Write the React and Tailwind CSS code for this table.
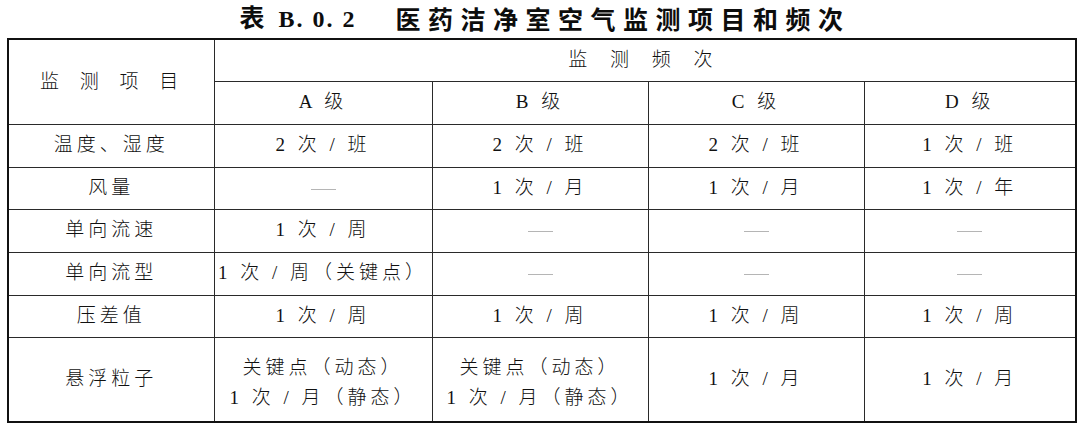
import React from 'react';

// 表 B.0.2 医药洁净室空气监测项目和频次
const rows = [
    { item: '温度、湿度', a: '2 次 / 班', b: '2 次 / 班', c: '2 次 / 班', d: '1 次 / 班', h: 'h-[43px]' },
    { item: '风量', a: '—', b: '1 次 / 月', c: '1 次 / 月', d: '1 次 / 年', h: 'h-[42px]' },
    { item: '单向流速', a: '1 次 / 周', b: '—', c: '—', d: '—', h: 'h-[43px]' },
    { item: '单向流型', a: '1 次 / 周（关键点）', b: '—', c: '—', d: '—', h: 'h-[43px]' },
    { item: '压差值', a: '1 次 / 周', b: '1 次 / 周', c: '1 次 / 周', d: '1 次 / 周', h: 'h-[42px]' },
    {
        item: '悬浮粒子',
        a: ['关键点（动态）', '1 次 / 月（静态）'],
        b: ['关键点（动态）', '1 次 / 月（静态）'],
        c: '1 次 / 月',
        d: '1 次 / 月',
        h: 'h-[85px]',
    },
];

const Cell = ({ value }) => {
    if (value === '—') {
        return <span className="inline-block w-[25px] h-px bg-[#b5b5b5] align-middle" />;
    }
    if (Array.isArray(value)) {
        return (
            <div className="flex flex-col items-center gap-[2px] pt-[8px] leading-[28px]">
                {value.map(v => <span key={v}>{v}</span>)}
            </div>
        );
    }
    return <span>{value}</span>;
};

const td = 'border border-[#2a2a2a] text-center align-middle p-0';

export default function App() {
    return (
        <div className="w-[1080px] h-[427px] bg-white text-[#111] font-['Liberation_Serif','Noto_Sans_CJK_SC',serif]">
            <div className="h-[38px] flex items-center justify-center pl-[10px] font-bold text-[25px] text-[#0d0d0d]">
                <span>表</span>
                <span className="ml-[14px] text-[24px] tracking-[2px]">B. 0. 2</span>
                <span className="ml-[39px] tracking-[7.5px] font-['Noto_Sans_CJK_SC',sans-serif]">医药洁净室空气监测项目和频次</span>
            </div>
            <table className="ml-[7px] w-[1068px] table-fixed border-collapse border-2 border-[#111] text-[19px] font-light tracking-[4px]">
                <colgroup>
                    <col className="w-[206px]" />
                    <col className="w-[218px]" />
                    <col className="w-[216px]" />
                    <col className="w-[216px]" />
                    <col className="w-[212px]" />
                </colgroup>
                <tbody>
                    <tr className="h-[42px]">
                        <td rowSpan={2} className={td}>
                            <span className="tracking-[8px] pl-[4px]">监 测 项 目</span>
                        </td>
                        <td colSpan={4} className={td}>
                            <span className="tracking-[9px]">监 测 频 次</span>
                        </td>
                    </tr>
                    <tr className="h-[43px]">
                        <td className={td}>A 级</td>
                        <td className={td}>B 级</td>
                        <td className={td}>C 级</td>
                        <td className={td}>D 级</td>
                    </tr>
                    {rows.map(r => (
                        <tr key={r.item} className={r.h}>
                            <td className={td}>{r.item}</td>
                            <td className={td}><Cell value={r.a} /></td>
                            <td className={td}><Cell value={r.b} /></td>
                            <td className={td}><Cell value={r.c} /></td>
                            <td className={td}><Cell value={r.d} /></td>
                        </tr>
                    ))}
                </tbody>
            </table>
        </div>
    );
}
